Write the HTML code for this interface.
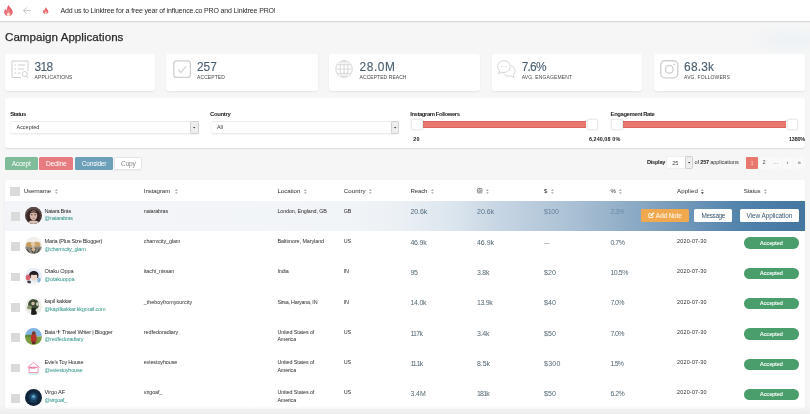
<!DOCTYPE html>
<html lang="en"><head><meta charset="utf-8"><title>Campaign Applications</title>
<style>
html,body{margin:0;padding:0}
body{width:810px;height:414px;overflow:hidden;position:relative;background:#f6f6f6;font-family:"Liberation Sans",sans-serif}
#app{position:absolute;left:0;top:0;width:810px;height:414px;will-change:transform;filter:blur(0.4px)}
.b{position:absolute;box-sizing:border-box}
.t{position:absolute;white-space:nowrap;display:block}
svg{position:absolute;overflow:visible}
</style></head>
<body>
<div id="app">
<div class="b" style="left:0.00px;top:0.00px;width:810.00px;height:22.00px;background:#fff;border-bottom:1.300px solid #d6d6d6;box-shadow:0 1px 1px rgba(0,0,0,.03);"></div>
<svg style="left:4.4px;top:5px" width="8.900" height="10.900" viewBox="0 0 18 22"><path d="M9.500 0C10.500 3.500 14 6 16 9.500 17.500 12 18 14 17.500 16 16.500 19.500 13 22 9 22 4.500 22 1 19 .5 15.500 0 12.500 1.500 10 3 8 3.500 9.500 4.500 10.500 5.500 11 5.500 7 7 3 9.500 0Z" fill="#e8606c"/><path d="M9.500 7C11 10 14 12 14 16 14 19.500 12 22 9 22 6 22 4 19.500 4 16.500 4 14 5.500 13 6.500 11.500 7.500 10 8.500 8.500 9.500 7Z" fill="#ee8285"/><path d="M9 14C10.500 16 12 17 12 19 12 21 10.500 22 9 22 7.500 22 6 21 6 19 6 17.500 7 17 7.500 16 8 16.500 8.300 16.800 8.600 16.800 8.600 15.800 8.700 15 9 14Z" fill="#fde6d2"/></svg>
<svg style="left:22.6px;top:6.8px" width="8.500" height="7.400" viewBox="0 0 17 15"><path d="M16.500 7.500H1.500M7.500 1L1 7.500l6.500 6.500" fill="none" stroke="#9c9c9c" stroke-width="1.200"/></svg>
<svg style="left:42.6px;top:6.8px" width="5.500" height="7.200" viewBox="0 0 18 22"><path d="M9.500 0C10.500 3.500 14 6 16 9.500 17.500 12 18 14 17.500 16 16.500 19.500 13 22 9 22 4.500 22 1 19 .5 15.500 0 12.500 1.500 10 3 8 3.500 9.500 4.500 10.500 5.500 11 5.500 7 7 3 9.500 0Z" fill="#e0575f"/><path d="M9.500 7C11 10 14 12 14 16 14 19.500 12 22 9 22 6 22 4 19.500 4 16.500 4 14 5.500 13 6.500 11.500 7.500 10 8.500 8.500 9.500 7Z" fill="#ee8285"/><path d="M9 14C10.500 16 12 17 12 19 12 21 10.500 22 9 22 7.500 22 6 21 6 19 6 17.500 7 17 7.500 16 8 16.500 8.300 16.800 8.600 16.800 8.600 15.800 8.700 15 9 14Z" fill="#fde6d2"/></svg>
<span class="t" style="left:60.50px;top:7.10px;font-size:7.00px;line-height:8.40px;color:#2b2b2b;letter-spacing:-0.146px;">Add us to Linktree for a free year of influence.co PRO and Linktree PRO!</span>
<div class="b" style="left:745.00px;top:24.00px;width:65.00px;height:32.00px;background:radial-gradient(ellipse at 70% 50%,rgba(230,239,246,.6) 0%,rgba(230,239,246,0) 70%);"></div>
<span class="t" style="left:5.00px;top:30.04px;font-size:11.60px;line-height:13.92px;color:#2a2a2a;letter-spacing:0.023px;-webkit-text-stroke:0.25px #2a2a2a;">Campaign Applications</span>
<div class="b" style="left:5.00px;top:54.40px;width:149.60px;height:36.40px;background:#fff;border-radius:3px;box-shadow:0 1px 2px rgba(0,0,0,.07);"></div>
<span class="t" style="left:34.60px;top:59.96px;font-size:11.90px;line-height:14.28px;color:#4a5f70;letter-spacing:-0.652px;-webkit-text-stroke:0.12px #4a5f70;">318</span>
<span class="t" style="left:34.60px;top:73.50px;font-size:5.00px;line-height:6.00px;color:#484848;letter-spacing:0.156px;">APPLICATIONS</span>
<div class="b" style="left:166.40px;top:54.40px;width:151.60px;height:36.40px;background:#fff;border-radius:3px;box-shadow:0 1px 2px rgba(0,0,0,.07);"></div>
<span class="t" style="left:197.00px;top:59.96px;font-size:11.90px;line-height:14.28px;color:#4a5f70;letter-spacing:-0.018px;-webkit-text-stroke:0.12px #4a5f70;">257</span>
<span class="t" style="left:197.00px;top:73.50px;font-size:5.00px;line-height:6.00px;color:#484848;letter-spacing:0.097px;">ACCEPTED</span>
<div class="b" style="left:329.10px;top:54.40px;width:150.70px;height:36.40px;background:#fff;border-radius:3px;box-shadow:0 1px 2px rgba(0,0,0,.07);"></div>
<span class="t" style="left:359.60px;top:59.96px;font-size:11.90px;line-height:14.28px;color:#4a5f70;letter-spacing:0.565px;-webkit-text-stroke:0.12px #4a5f70;">28.0M</span>
<span class="t" style="left:359.60px;top:73.50px;font-size:5.00px;line-height:6.00px;color:#484848;letter-spacing:0.056px;">ACCEPTED REACH</span>
<div class="b" style="left:491.80px;top:54.40px;width:150.40px;height:36.40px;background:#fff;border-radius:3px;box-shadow:0 1px 2px rgba(0,0,0,.07);"></div>
<span class="t" style="left:521.70px;top:59.96px;font-size:11.90px;line-height:14.28px;color:#4a5f70;letter-spacing:-0.756px;-webkit-text-stroke:0.12px #4a5f70;">7.6%</span>
<span class="t" style="left:521.70px;top:73.50px;font-size:5.00px;line-height:6.00px;color:#484848;letter-spacing:0.132px;">AVG. ENGAGEMENT</span>
<div class="b" style="left:653.90px;top:54.40px;width:150.90px;height:36.40px;background:#fff;border-radius:3px;box-shadow:0 1px 2px rgba(0,0,0,.07);"></div>
<span class="t" style="left:684.10px;top:59.96px;font-size:11.90px;line-height:14.28px;color:#4a5f70;letter-spacing:0.218px;-webkit-text-stroke:0.12px #4a5f70;">68.3k</span>
<span class="t" style="left:684.10px;top:73.50px;font-size:5.00px;line-height:6.00px;color:#484848;letter-spacing:0.110px;">AVG. FOLLOWERS</span>
<svg style="left:10.5px;top:59.8px" width="18" height="18.500" viewBox="0 0 36 37"><path d="M34 22V2H2v33h18" fill="none" stroke="#cfcfcf" stroke-width="2"/><path d="M7 10h3M14 10h14M7 18h3M14 18h12M7 26h3M14 26h5" stroke="#cfcfcf" stroke-width="2"/><circle cx="27.500" cy="28" r="5" fill="none" stroke="#cfcfcf" stroke-width="2"/><path d="M31 32l4 4" stroke="#cfcfcf" stroke-width="2"/></svg>
<svg style="left:172.7px;top:60px" width="18.200" height="18.300" viewBox="0 0 36 36"><rect x="1.500" y="1.500" width="33" height="33" rx="6" fill="none" stroke="#cfcfcf" stroke-width="2.500"/><path d="M10 19l5.500 5.500L26 12" fill="none" stroke="#cfcfcf" stroke-width="2"/></svg>
<svg style="left:335.3px;top:60.1px" width="18.100" height="18.100" viewBox="0 0 36 36"><g fill="none" stroke="#cfcfcf" stroke-width="1.600"><circle cx="18" cy="18" r="16.500"/><ellipse cx="18" cy="18" rx="8" ry="16.500"/><path d="M18 1.500v33M1.500 18h33M4 9.500h28M4 26.500h28"/></g></svg>
<svg style="left:497.4px;top:59.8px" width="18.800" height="18.500" viewBox="0 0 38 37"><g fill="none" stroke="#cfcfcf" stroke-width="1.800" stroke-linejoin="round"><path d="M14 1.500C7 1.500 1.500 6.500 1.500 13c0 3.200 1.300 6 3.500 8L3.500 28l6.500-3.500c1.300.3 2.600.5 4 .5 7 0 12.500-5 12.500-12S21 1.500 14 1.500Z"/><path d="M28.500 11c4.500 1.800 8 5.800 8 10.500 0 3-1.300 5.600-3.500 7.500l1.500 6.500-6.500-3.500c-1.300.3-2.600.5-4 .5-4.500 0-8.500-2-10.500-5"/></g><g fill="#cfcfcf"><circle cx="9" cy="13" r="1.300"/><circle cx="14" cy="13" r="1.300"/><circle cx="19" cy="13" r="1.300"/></g></svg>
<svg style="left:659.7px;top:60px" width="18.600" height="18.600" viewBox="0 0 36 36"><g fill="none" stroke="#cfcfcf" stroke-width="2.600"><rect x="1.500" y="1.500" width="33" height="33" rx="8"/><circle cx="18" cy="18" r="7.500"/></g><circle cx="27.500" cy="8.500" r="1.800" fill="#cfcfcf"/></svg>
<div class="b" style="left:5.00px;top:98.30px;width:800.00px;height:50.20px;background:#fff;border-radius:3px;box-shadow:0 1px 1.200px rgba(0,0,0,.12);"></div>
<span class="t" style="left:10.30px;top:110.56px;font-size:5.90px;line-height:7.08px;color:#222;letter-spacing:-0.422px;font-weight:700;">Status</span>
<span class="t" style="left:210.10px;top:110.56px;font-size:5.90px;line-height:7.08px;color:#222;letter-spacing:-0.331px;font-weight:700;">Country</span>
<span class="t" style="left:410.20px;top:110.56px;font-size:5.90px;line-height:7.08px;color:#222;letter-spacing:-0.420px;font-weight:700;">Instagram Followers</span>
<span class="t" style="left:610.60px;top:110.56px;font-size:5.90px;line-height:7.08px;color:#222;letter-spacing:-0.396px;font-weight:700;">Engagement Rate</span>
<div class="b" style="left:10.20px;top:121.10px;width:188.50px;height:12.50px;background:#fff;border:1px solid #ececec;border-left-color:#f7f7f7;border-radius:2px;box-shadow:0 1px 1px rgba(0,0,0,.04);"></div>
<div class="b" style="left:190.40px;top:121.10px;width:8.30px;height:12.50px;background:#eeeeee;border:1px solid #d2d2d2;border-radius:1.500px;"></div>
<svg style="left:193.40px;top:126.85px" width="2.400" height="1.600" viewBox="0 0 6 4"><path d="M0 0h6L3 4Z" fill="#333"/></svg>
<span class="t" style="left:16.50px;top:124.11px;font-size:5.40px;line-height:6.48px;color:#333;letter-spacing:0.036px;">Accepted</span>
<div class="b" style="left:210.60px;top:121.10px;width:188.40px;height:12.50px;background:#fff;border:1px solid #ececec;border-left-color:#f7f7f7;border-radius:2px;box-shadow:0 1px 1px rgba(0,0,0,.04);"></div>
<div class="b" style="left:390.70px;top:121.10px;width:8.30px;height:12.50px;background:#eeeeee;border:1px solid #d2d2d2;border-radius:1.500px;"></div>
<svg style="left:393.70px;top:126.85px" width="2.400" height="1.600" viewBox="0 0 6 4"><path d="M0 0h6L3 4Z" fill="#333"/></svg>
<span class="t" style="left:217.00px;top:124.11px;font-size:5.40px;line-height:6.48px;color:#333;letter-spacing:-0.067px;">All</span>
<div class="b" style="left:423.30px;top:121.10px;width:163.20px;height:6.50px;background:#e8786e;border-top:1px solid #d9675f;border-bottom:1px solid #d9675f;"></div>
<div class="b" style="left:410.70px;top:119.40px;width:12.60px;height:10.20px;background:#fff;border:1px solid #ececec;border-radius:2px;box-shadow:0 0 2px rgba(0,0,0,.12);"></div>
<div class="b" style="left:586.50px;top:119.40px;width:11.50px;height:10.20px;background:#fff;border:1px solid #ececec;border-radius:2px;box-shadow:0 0 2px rgba(0,0,0,.12);"></div>
<div class="b" style="left:623.30px;top:121.10px;width:163.20px;height:6.50px;background:#e8786e;border-top:1px solid #d9675f;border-bottom:1px solid #d9675f;"></div>
<div class="b" style="left:610.60px;top:119.40px;width:12.70px;height:10.20px;background:#fff;border:1px solid #ececec;border-radius:2px;box-shadow:0 0 2px rgba(0,0,0,.12);"></div>
<div class="b" style="left:786.50px;top:119.40px;width:11.40px;height:10.20px;background:#fff;border:1px solid #ececec;border-radius:2px;box-shadow:0 0 2px rgba(0,0,0,.12);"></div>
<span class="t" style="left:413.20px;top:135.96px;font-size:5.40px;line-height:6.48px;color:#222;letter-spacing:0.297px;font-weight:700;">20</span>
<span class="t" style="left:589.00px;top:135.96px;font-size:5.40px;line-height:6.48px;color:#222;letter-spacing:0.060px;font-weight:700;">6,240,08</span>
<span class="t" style="left:612.20px;top:135.96px;font-size:5.40px;line-height:6.48px;color:#222;letter-spacing:0.348px;font-weight:700;">0%</span>
<span class="t" style="left:789.00px;top:135.96px;font-size:5.40px;line-height:6.48px;color:#222;letter-spacing:-0.163px;font-weight:700;">1380%</span>
<div class="b" style="left:4.70px;top:156.50px;width:33.00px;height:13.00px;background:#7fbc99;border-radius:1.500px;"></div>
<span class="t" style="left:11.70px;top:159.64px;font-size:6.60px;line-height:7.92px;color:#fff;letter-spacing:-0.196px;">Accept</span>
<div class="b" style="left:39.10px;top:156.50px;width:34.40px;height:13.00px;background:#e77c80;border-radius:1.500px;"></div>
<span class="t" style="left:46.05px;top:159.64px;font-size:6.60px;line-height:7.92px;color:#fff;letter-spacing:-0.216px;">Decline</span>
<div class="b" style="left:75.00px;top:156.50px;width:38.00px;height:13.00px;background:#6ca0b8;border-radius:1.500px;"></div>
<span class="t" style="left:81.75px;top:159.64px;font-size:6.60px;line-height:7.92px;color:#fff;letter-spacing:-0.239px;">Consider</span>
<div class="b" style="left:114.20px;top:156.50px;width:28.30px;height:13.00px;background:#fff;border-radius:1.500px;border:1px solid #e0e6ea;box-shadow:0 1px 1px rgba(0,0,0,.04);"></div>
<span class="t" style="left:121.10px;top:159.64px;font-size:6.60px;line-height:7.92px;color:#858585;letter-spacing:-0.227px;">Copy</span>
<span class="t" style="left:646.90px;top:159.24px;font-size:5.60px;line-height:6.72px;color:#222;letter-spacing:-0.231px;font-weight:700;">Display</span>
<div class="b" style="left:666.40px;top:156.00px;width:26.60px;height:13.00px;background:#fff;border:1px solid #efefef;border-radius:2px;"></div>
<div class="b" style="left:684.90px;top:156.00px;width:7.80px;height:13.00px;background:#efefef;border:1px solid #cfcfcf;border-radius:1.500px;"></div>
<svg style="left:687.6px;top:162px" width="2.400" height="1.600" viewBox="0 0 6 4"><path d="M0 0h6L3 4Z" fill="#333"/></svg>
<span class="t" style="left:672.30px;top:159.84px;font-size:5.60px;line-height:6.72px;color:#444;letter-spacing:-0.165px;">25</span>
<span class="t" style="left:694.60px;top:159.24px;font-size:5.60px;line-height:6.72px;color:#333;letter-spacing:-0.175px;">of </span>
<span class="t" style="left:700.30px;top:159.24px;font-size:5.60px;line-height:6.72px;color:#222;letter-spacing:-0.281px;font-weight:700;">257</span>
<span class="t" style="left:710.20px;top:159.24px;font-size:5.60px;line-height:6.72px;color:#333;letter-spacing:-0.081px;">applications</span>
<div class="b" style="left:746.30px;top:156.60px;width:11.50px;height:12.00px;background:#e8786e;border-radius:1px;"></div>
<span class="t" style="left:750.60px;top:159.54px;font-size:5.60px;line-height:6.72px;color:#f8cfca;">1</span>
<div class="b" style="left:758.50px;top:156.60px;width:11.20px;height:12.00px;background:#f9f9f9;border-radius:1px;"></div>
<span class="t" style="left:762.54px;top:159.34px;font-size:5.60px;line-height:6.72px;color:#555;">2</span>
<div class="b" style="left:770.20px;top:156.60px;width:11.20px;height:12.00px;background:#f9f9f9;border-radius:1px;"></div>
<span class="t" style="left:773.00px;top:159.34px;font-size:5.60px;line-height:6.72px;color:#555;">…</span>
<div class="b" style="left:781.90px;top:156.60px;width:11.20px;height:12.00px;background:#f9f9f9;border-radius:1px;"></div>
<span class="t" style="left:786.57px;top:159.34px;font-size:5.60px;line-height:6.72px;color:#555;">›</span>
<div class="b" style="left:793.60px;top:156.60px;width:11.20px;height:12.00px;background:#f9f9f9;border-radius:1px;"></div>
<span class="t" style="left:797.64px;top:159.34px;font-size:5.60px;line-height:6.72px;color:#555;">»</span>
<div class="b" style="left:5.00px;top:180.30px;width:800.00px;height:229.20px;background:#fff;border-radius:3px 3px 0 0;box-shadow:0 1px 2px rgba(0,0,0,.08);"></div>
<div class="b" style="left:5.00px;top:200.50px;width:799.50px;height:30.40px;background:linear-gradient(to right,#f3f5f8 0%,#f2f5f8 42%,#ebf0f5 49.4%,#dce6ee 55.7%,#c6d5e3 61.9%,#afc4d7 69.4%,#93afc8 76.9%,#6d95b8 85.7%,#4f81aa 92.5%,#4576a0 100%);"></div>
<div class="b" style="left:10.30px;top:186.70px;width:9.40px;height:9.00px;background:#dadada;"></div>
<span class="t" style="left:23.70px;top:187.04px;font-size:6.10px;line-height:7.32px;color:#2e2e2e;letter-spacing:-0.105px;">Username</span>
<svg style="left:55.00px;top:188.7px" width="2.800" height="5.100" viewBox="0 0 7 13"><path d="M3.500 0L7 5H0Z" fill="#a8a8a8"/><path d="M3.500 13L0 8h7Z" fill="#a8a8a8"/></svg>
<span class="t" style="left:143.80px;top:187.04px;font-size:6.10px;line-height:7.32px;color:#2e2e2e;letter-spacing:-0.080px;">Instagram</span>
<svg style="left:174.50px;top:188.7px" width="2.800" height="5.100" viewBox="0 0 7 13"><path d="M3.500 0L7 5H0Z" fill="#a8a8a8"/><path d="M3.500 13L0 8h7Z" fill="#a8a8a8"/></svg>
<span class="t" style="left:277.40px;top:187.04px;font-size:6.10px;line-height:7.32px;color:#2e2e2e;letter-spacing:-0.008px;">Location</span>
<svg style="left:303.60px;top:188.7px" width="2.800" height="5.100" viewBox="0 0 7 13"><path d="M3.500 0L7 5H0Z" fill="#a8a8a8"/><path d="M3.500 13L0 8h7Z" fill="#a8a8a8"/></svg>
<span class="t" style="left:343.70px;top:187.04px;font-size:6.10px;line-height:7.32px;color:#2e2e2e;letter-spacing:0.091px;">Country</span>
<svg style="left:369.00px;top:188.7px" width="2.800" height="5.100" viewBox="0 0 7 13"><path d="M3.500 0L7 5H0Z" fill="#a8a8a8"/><path d="M3.500 13L0 8h7Z" fill="#a8a8a8"/></svg>
<span class="t" style="left:410.40px;top:187.04px;font-size:6.10px;line-height:7.32px;color:#2e2e2e;letter-spacing:-0.147px;">Reach</span>
<svg style="left:430.60px;top:188.7px" width="2.800" height="5.100" viewBox="0 0 7 13"><path d="M3.500 0L7 5H0Z" fill="#a8a8a8"/><path d="M3.500 13L0 8h7Z" fill="#a8a8a8"/></svg>
<svg style="left:477px;top:188px" width="5.400" height="5.400" viewBox="0 0 12 12"><rect x="1" y="1" width="10" height="10" rx="2.500" fill="none" stroke="#333" stroke-width="1.300"/><circle cx="6" cy="6" r="2.300" fill="none" stroke="#333" stroke-width="1.200"/></svg>
<svg style="left:485.60px;top:188.7px" width="2.800" height="5.100" viewBox="0 0 7 13"><path d="M3.500 0L7 5H0Z" fill="#a8a8a8"/><path d="M3.500 13L0 8h7Z" fill="#a8a8a8"/></svg>
<span class="t" style="left:544.00px;top:187.04px;font-size:6.10px;line-height:7.32px;color:#2e2e2e;letter-spacing:-0.093px;">$</span>
<svg style="left:550.60px;top:188.7px" width="2.800" height="5.100" viewBox="0 0 7 13"><path d="M3.500 0L7 5H0Z" fill="#a8a8a8"/><path d="M3.500 13L0 8h7Z" fill="#a8a8a8"/></svg>
<span class="t" style="left:610.40px;top:187.04px;font-size:6.10px;line-height:7.32px;color:#2e2e2e;letter-spacing:-0.224px;">%</span>
<svg style="left:618.80px;top:188.7px" width="2.800" height="5.100" viewBox="0 0 7 13"><path d="M3.500 0L7 5H0Z" fill="#a8a8a8"/><path d="M3.500 13L0 8h7Z" fill="#a8a8a8"/></svg>
<span class="t" style="left:677.00px;top:187.04px;font-size:6.10px;line-height:7.32px;color:#2e2e2e;letter-spacing:0.093px;">Applied</span>
<svg style="left:701.40px;top:188.7px" width="2.800" height="5.100" viewBox="0 0 7 13"><path d="M3.500 0L7 5H0Z" fill="#a8a8a8"/><path d="M3.500 13L0 8h7Z" fill="#222"/></svg>
<span class="t" style="left:743.70px;top:187.04px;font-size:6.10px;line-height:7.32px;color:#2e2e2e;letter-spacing:-0.066px;">Status</span>
<svg style="left:764.00px;top:188.7px" width="2.800" height="5.100" viewBox="0 0 7 13"><path d="M3.500 0L7 5H0Z" fill="#a8a8a8"/><path d="M3.500 13L0 8h7Z" fill="#a8a8a8"/></svg>
<div class="b" style="left:10.60px;top:212.00px;width:9.20px;height:8.80px;background:#dadada;"></div>
<span class="t" style="left:44.50px;top:207.54px;font-size:5.60px;line-height:6.72px;color:#2b2b2b;letter-spacing:-0.279px;">Naiara Brás</span>
<span class="t" style="left:44.50px;top:215.24px;font-size:5.60px;line-height:6.72px;color:#2f9488;letter-spacing:-0.359px;">@naiarabras</span>
<span class="t" style="left:143.80px;top:207.66px;font-size:5.40px;line-height:6.48px;color:#2b2b2b;letter-spacing:-0.122px;">naiarabras</span>
<span class="t" style="left:277.40px;top:207.66px;font-size:5.40px;line-height:6.48px;color:#2b2b2b;letter-spacing:-0.118px;">London, England, GB</span>
<span class="t" style="left:343.70px;top:207.66px;font-size:5.40px;line-height:6.48px;color:#2b2b2b;letter-spacing:-0.151px;">GB</span>
<span class="t" style="left:410.40px;top:208.40px;font-size:7.00px;line-height:8.40px;color:#52697c;letter-spacing:-0.045px;">20.6k</span>
<span class="t" style="left:477.00px;top:208.40px;font-size:7.00px;line-height:8.40px;color:#5a7389;letter-spacing:0.035px;">20.6k</span>
<span class="t" style="left:544.00px;top:208.40px;font-size:7.00px;line-height:8.40px;color:#67839c;letter-spacing:-0.243px;">$100</span>
<span class="t" style="left:610.40px;top:208.40px;font-size:7.00px;line-height:8.40px;color:#6b8aa6;letter-spacing:-0.614px;">2.3%</span>
<div class="b" style="left:10.60px;top:242.30px;width:9.20px;height:8.80px;background:#dadada;"></div>
<span class="t" style="left:44.50px;top:237.84px;font-size:5.60px;line-height:6.72px;color:#2b2b2b;letter-spacing:-0.232px;">Maria (Plus Size Blogger)</span>
<span class="t" style="left:44.50px;top:245.54px;font-size:5.60px;line-height:6.72px;color:#2f9488;letter-spacing:-0.253px;">@charmcity_glam</span>
<span class="t" style="left:143.80px;top:237.96px;font-size:5.40px;line-height:6.48px;color:#2b2b2b;letter-spacing:-0.094px;">charmcity_glam</span>
<span class="t" style="left:277.40px;top:237.96px;font-size:5.40px;line-height:6.48px;color:#2b2b2b;letter-spacing:-0.069px;">Baltimore, Maryland</span>
<span class="t" style="left:343.70px;top:237.96px;font-size:5.40px;line-height:6.48px;color:#2b2b2b;letter-spacing:-0.101px;">US</span>
<span class="t" style="left:410.40px;top:238.70px;font-size:7.00px;line-height:8.40px;color:#536672;letter-spacing:-0.185px;">46.9k</span>
<span class="t" style="left:477.00px;top:238.70px;font-size:7.00px;line-height:8.40px;color:#536672;letter-spacing:-0.025px;">46.9k</span>
<span class="t" style="left:544.00px;top:239.54px;font-size:5.60px;line-height:6.72px;color:#536672;letter-spacing:-0.100px;">—</span>
<span class="t" style="left:610.40px;top:238.70px;font-size:7.00px;line-height:8.40px;color:#536672;letter-spacing:-0.439px;">0.7%</span>
<span class="t" style="left:677.00px;top:237.96px;font-size:5.40px;line-height:6.48px;color:#2b2b2b;letter-spacing:0.218px;">2020-07-30</span>
<div class="b" style="left:743.60px;top:237.40px;width:55.50px;height:11.40px;background:#4a9e6c;border-radius:5.700px;"></div>
<span class="t" style="left:759.80px;top:239.84px;font-size:5.60px;line-height:6.72px;color:#f4fbf6;letter-spacing:-0.301px;font-weight:700;">Accepted</span>
<div class="b" style="left:10.60px;top:272.60px;width:9.20px;height:8.80px;background:#dadada;"></div>
<span class="t" style="left:44.50px;top:268.14px;font-size:5.60px;line-height:6.72px;color:#2b2b2b;letter-spacing:-0.130px;">Otaku Oppa</span>
<span class="t" style="left:44.50px;top:275.84px;font-size:5.60px;line-height:6.72px;color:#2f9488;letter-spacing:-0.194px;">@otakuoppa</span>
<span class="t" style="left:143.80px;top:268.26px;font-size:5.40px;line-height:6.48px;color:#2b2b2b;letter-spacing:-0.063px;">itachi_nissan</span>
<span class="t" style="left:277.40px;top:268.26px;font-size:5.40px;line-height:6.48px;color:#2b2b2b;letter-spacing:-0.102px;">India</span>
<span class="t" style="left:343.70px;top:268.26px;font-size:5.40px;line-height:6.48px;color:#2b2b2b;letter-spacing:-0.300px;">IN</span>
<span class="t" style="left:410.40px;top:269.00px;font-size:7.00px;line-height:8.40px;color:#536672;letter-spacing:-0.193px;">95</span>
<span class="t" style="left:477.00px;top:269.00px;font-size:7.00px;line-height:8.40px;color:#536672;letter-spacing:-0.258px;">3.8k</span>
<span class="t" style="left:544.00px;top:269.00px;font-size:7.00px;line-height:8.40px;color:#536672;letter-spacing:0.073px;">$20</span>
<span class="t" style="left:610.40px;top:269.00px;font-size:7.00px;line-height:8.40px;color:#536672;letter-spacing:-0.450px;">10.5%</span>
<span class="t" style="left:677.00px;top:268.26px;font-size:5.40px;line-height:6.48px;color:#2b2b2b;letter-spacing:0.218px;">2020-07-30</span>
<div class="b" style="left:743.60px;top:267.70px;width:55.50px;height:11.40px;background:#4a9e6c;border-radius:5.700px;"></div>
<span class="t" style="left:759.80px;top:270.14px;font-size:5.60px;line-height:6.72px;color:#f4fbf6;letter-spacing:-0.301px;font-weight:700;">Accepted</span>
<div class="b" style="left:10.60px;top:302.90px;width:9.20px;height:8.80px;background:#dadada;"></div>
<span class="t" style="left:44.50px;top:298.44px;font-size:5.60px;line-height:6.72px;color:#2b2b2b;letter-spacing:-0.197px;">kapil kakkar</span>
<span class="t" style="left:44.50px;top:306.14px;font-size:5.60px;line-height:6.72px;color:#2f9488;letter-spacing:-0.211px;">@kapilkakkar.kkgmail.com</span>
<span class="t" style="left:143.80px;top:298.56px;font-size:5.40px;line-height:6.48px;color:#2b2b2b;letter-spacing:-0.012px;">_theboyfromyourcity</span>
<span class="t" style="left:277.40px;top:298.56px;font-size:5.40px;line-height:6.48px;color:#2b2b2b;letter-spacing:-0.229px;">Sirsa, Haryana, IN</span>
<span class="t" style="left:343.70px;top:298.56px;font-size:5.40px;line-height:6.48px;color:#2b2b2b;letter-spacing:-0.300px;">IN</span>
<span class="t" style="left:410.40px;top:299.30px;font-size:7.00px;line-height:8.40px;color:#536672;letter-spacing:-0.245px;">14.0k</span>
<span class="t" style="left:477.00px;top:299.30px;font-size:7.00px;line-height:8.40px;color:#536672;letter-spacing:-0.365px;">13.9k</span>
<span class="t" style="left:544.00px;top:299.30px;font-size:7.00px;line-height:8.40px;color:#536672;letter-spacing:0.073px;">$40</span>
<span class="t" style="left:610.40px;top:299.30px;font-size:7.00px;line-height:8.40px;color:#536672;letter-spacing:-0.614px;">7.0%</span>
<span class="t" style="left:677.00px;top:298.56px;font-size:5.40px;line-height:6.48px;color:#2b2b2b;letter-spacing:0.218px;">2020-07-30</span>
<div class="b" style="left:743.60px;top:298.00px;width:55.50px;height:11.40px;background:#4a9e6c;border-radius:5.700px;"></div>
<span class="t" style="left:759.80px;top:300.44px;font-size:5.60px;line-height:6.72px;color:#f4fbf6;letter-spacing:-0.301px;font-weight:700;">Accepted</span>
<div class="b" style="left:10.60px;top:333.20px;width:9.20px;height:8.80px;background:#dadada;"></div>
<span class="t" style="left:44.50px;top:328.74px;font-size:5.60px;line-height:6.72px;color:#2b2b2b;letter-spacing:-0.227px;">Baia ✈ Travel Writer | Blogger</span>
<span class="t" style="left:44.50px;top:336.44px;font-size:5.60px;line-height:6.72px;color:#2f9488;letter-spacing:-0.200px;">@redfedoradiary</span>
<span class="t" style="left:143.80px;top:328.86px;font-size:5.40px;line-height:6.48px;color:#2b2b2b;letter-spacing:-0.023px;">redfedoradiary</span>
<span class="t" style="left:277.40px;top:328.86px;font-size:5.40px;line-height:6.48px;color:#2b2b2b;letter-spacing:-0.095px;">United States of</span>
<span class="t" style="left:277.40px;top:336.46px;font-size:5.40px;line-height:6.48px;color:#2b2b2b;letter-spacing:-0.172px;">America</span>
<span class="t" style="left:343.70px;top:328.86px;font-size:5.40px;line-height:6.48px;color:#2b2b2b;letter-spacing:-0.101px;">US</span>
<span class="t" style="left:410.40px;top:329.60px;font-size:7.00px;line-height:8.40px;color:#536672;letter-spacing:-0.690px;">117k</span>
<span class="t" style="left:477.00px;top:329.60px;font-size:7.00px;line-height:8.40px;color:#536672;letter-spacing:-0.233px;">3.4k</span>
<span class="t" style="left:544.00px;top:329.60px;font-size:7.00px;line-height:8.40px;color:#536672;letter-spacing:0.107px;">$50</span>
<span class="t" style="left:610.40px;top:329.60px;font-size:7.00px;line-height:8.40px;color:#536672;letter-spacing:-0.589px;">7.0%</span>
<span class="t" style="left:677.00px;top:328.86px;font-size:5.40px;line-height:6.48px;color:#2b2b2b;letter-spacing:0.218px;">2020-07-30</span>
<div class="b" style="left:743.60px;top:328.30px;width:55.50px;height:11.40px;background:#4a9e6c;border-radius:5.700px;"></div>
<span class="t" style="left:759.80px;top:330.74px;font-size:5.60px;line-height:6.72px;color:#f4fbf6;letter-spacing:-0.301px;font-weight:700;">Accepted</span>
<div class="b" style="left:10.60px;top:363.50px;width:9.20px;height:8.80px;background:#dadada;"></div>
<span class="t" style="left:44.50px;top:359.04px;font-size:5.60px;line-height:6.72px;color:#2b2b2b;letter-spacing:-0.242px;">Evie&#x27;s Toy House</span>
<span class="t" style="left:44.50px;top:366.74px;font-size:5.60px;line-height:6.72px;color:#2f9488;letter-spacing:-0.263px;">@eviestoyhouse</span>
<span class="t" style="left:143.80px;top:359.16px;font-size:5.40px;line-height:6.48px;color:#2b2b2b;letter-spacing:-0.079px;">eviestoyhouse</span>
<span class="t" style="left:277.40px;top:359.16px;font-size:5.40px;line-height:6.48px;color:#2b2b2b;letter-spacing:-0.095px;">United States of</span>
<span class="t" style="left:277.40px;top:366.76px;font-size:5.40px;line-height:6.48px;color:#2b2b2b;letter-spacing:-0.172px;">America</span>
<span class="t" style="left:343.70px;top:359.16px;font-size:5.40px;line-height:6.48px;color:#2b2b2b;letter-spacing:-0.101px;">US</span>
<span class="t" style="left:410.40px;top:359.90px;font-size:7.00px;line-height:8.40px;color:#536672;letter-spacing:-0.941px;">11.1k</span>
<span class="t" style="left:477.00px;top:359.90px;font-size:7.00px;line-height:8.40px;color:#536672;letter-spacing:-0.058px;">8.5k</span>
<span class="t" style="left:544.00px;top:359.90px;font-size:7.00px;line-height:8.40px;color:#536672;letter-spacing:0.282px;">$300</span>
<span class="t" style="left:610.40px;top:359.90px;font-size:7.00px;line-height:8.40px;color:#536672;letter-spacing:-0.764px;">1.5%</span>
<span class="t" style="left:677.00px;top:359.16px;font-size:5.40px;line-height:6.48px;color:#2b2b2b;letter-spacing:0.218px;">2020-07-30</span>
<div class="b" style="left:743.60px;top:358.60px;width:55.50px;height:11.40px;background:#4a9e6c;border-radius:5.700px;"></div>
<span class="t" style="left:759.80px;top:361.04px;font-size:5.60px;line-height:6.72px;color:#f4fbf6;letter-spacing:-0.301px;font-weight:700;">Accepted</span>
<div class="b" style="left:10.60px;top:393.80px;width:9.20px;height:8.80px;background:#dadada;"></div>
<span class="t" style="left:44.50px;top:389.34px;font-size:5.60px;line-height:6.72px;color:#2b2b2b;letter-spacing:-0.109px;">Virgo AF</span>
<span class="t" style="left:44.50px;top:397.04px;font-size:5.60px;line-height:6.72px;color:#2f9488;letter-spacing:-0.379px;">@virgoaf_</span>
<span class="t" style="left:143.80px;top:389.46px;font-size:5.40px;line-height:6.48px;color:#2b2b2b;letter-spacing:-0.089px;">virgoaf_</span>
<span class="t" style="left:277.40px;top:389.46px;font-size:5.40px;line-height:6.48px;color:#2b2b2b;letter-spacing:-0.095px;">United States of</span>
<span class="t" style="left:277.40px;top:397.06px;font-size:5.40px;line-height:6.48px;color:#2b2b2b;letter-spacing:-0.172px;">America</span>
<span class="t" style="left:343.70px;top:389.46px;font-size:5.40px;line-height:6.48px;color:#2b2b2b;letter-spacing:-0.101px;">US</span>
<span class="t" style="left:410.40px;top:390.20px;font-size:7.00px;line-height:8.40px;color:#536672;letter-spacing:-0.066px;">3.4M</span>
<span class="t" style="left:477.00px;top:390.20px;font-size:7.00px;line-height:8.40px;color:#536672;letter-spacing:-0.795px;">181k</span>
<span class="t" style="left:544.00px;top:390.20px;font-size:7.00px;line-height:8.40px;color:#536672;letter-spacing:0.107px;">$50</span>
<span class="t" style="left:610.40px;top:390.20px;font-size:7.00px;line-height:8.40px;color:#536672;letter-spacing:-0.514px;">6.2%</span>
<span class="t" style="left:677.00px;top:389.46px;font-size:5.40px;line-height:6.48px;color:#2b2b2b;letter-spacing:0.218px;">2020-07-30</span>
<div class="b" style="left:743.60px;top:388.90px;width:55.50px;height:11.40px;background:#4a9e6c;border-radius:5.700px;"></div>
<span class="t" style="left:759.80px;top:391.34px;font-size:5.60px;line-height:6.72px;color:#f4fbf6;letter-spacing:-0.301px;font-weight:700;">Accepted</span>
<div class="b" style="left:641.00px;top:209.30px;width:47.70px;height:12.40px;background:#f0a94e;border-radius:1.500px;"></div>
<svg style="left:648.3px;top:212.3px" width="6.400" height="6.400" viewBox="0 0 12 12"><path d="M9 6.500V10.500H1.500V3H6" fill="none" stroke="#fff" stroke-width="1.500"/><path d="M4.500 8l.5-2.500L10 .5l2 2L7 7.500Z" fill="#fff"/></svg>
<span class="t" style="left:655.60px;top:212.00px;font-size:6.50px;line-height:7.80px;color:#fce8cc;letter-spacing:-0.386px;font-weight:700;">Add Note</span>
<div class="b" style="left:694.10px;top:209.30px;width:38.10px;height:12.40px;background:#fff;border-radius:1.500px;"></div>
<span class="t" style="left:701.60px;top:211.96px;font-size:6.40px;line-height:7.68px;color:#38546d;letter-spacing:-0.367px;">Message</span>
<div class="b" style="left:740.00px;top:209.30px;width:59.10px;height:12.40px;background:#fff;border-radius:1.500px;"></div>
<span class="t" style="left:746.50px;top:211.96px;font-size:6.40px;line-height:7.68px;color:#38546d;letter-spacing:-0.043px;">View Application</span>
<svg style="left:24.6px;top:207.00px" width="17" height="17" viewBox="0 0 34 34"><defs><clipPath id="c0"><circle cx="17" cy="17" r="17"/></clipPath></defs><g clip-path="url(#c0)"><rect width="34" height="34" fill="#4b3833"/><rect width="34" height="12" fill="#5d4c47"/><path d="M5 34V14C5 2 29 2 29 14V34Z" fill="#33221f"/><ellipse cx="17" cy="17" rx="7.500" ry="10" fill="#d2b3a6"/><path d="M4 34c2-6 8-7 13-7s11 1 13 7Z" fill="#d9c3b9"/><path d="M9.500 13c1-6 14-6 15 0-3-3-12-3-15 0Z" fill="#33221f"/><ellipse cx="13.500" cy="15.500" rx="1.800" ry="1" fill="#4a332d"/><ellipse cx="20.500" cy="15.500" rx="1.800" ry="1" fill="#4a332d"/><ellipse cx="17" cy="22.500" rx="2.200" ry=".9" fill="#a8685f"/></g></svg>
<svg style="left:24.6px;top:237.30px" width="17" height="17" viewBox="0 0 34 34"><defs><clipPath id="c1"><circle cx="17" cy="17" r="17"/></clipPath></defs><g clip-path="url(#c1)"><rect width="34" height="34" fill="#f1eee9"/><ellipse cx="9" cy="16" rx="7" ry="6" fill="#c79a5c"/><ellipse cx="23" cy="15" rx="8" ry="5.500" fill="#cfa468"/><ellipse cx="16" cy="14" rx="4" ry="4" fill="#e6cdb2"/><path d="M0 20c6-3 12 2 17 1s11-4 17-1v14H0Z" fill="#8d8a84"/><path d="M4 24l5 8M12 22l4 10M22 22l-3 11M29 23l-5 9" stroke="#4f4c48" stroke-width="2.500"/><ellipse cx="17" cy="25" rx="4" ry="3" fill="#d9b48c"/></g></svg>
<svg style="left:24.6px;top:267.60px" width="17" height="17" viewBox="0 0 34 34"><defs><clipPath id="c2"><circle cx="17" cy="17" r="17"/></clipPath></defs><g clip-path="url(#c2)"><rect width="34" height="34" fill="#e6edf5"/><path d="M8 17C7 3 27 3 27 15l-1 5H9Z" fill="#241f25"/><ellipse cx="18" cy="18" rx="6.500" ry="7.500" fill="#ecd6ca"/><path d="M10 13c3-6 12-6 16 0-5 1-11 1-16 0Z" fill="#241f25"/><path d="M4 34c2-8 26-8 28 0Z" fill="#f6f6f6"/><ellipse cx="6" cy="19" rx="4.500" ry="6" fill="#d9626f"/><ellipse cx="8" cy="28" rx="4" ry="3" fill="#3b3a44"/><ellipse cx="28" cy="24" rx="3.500" ry="5" fill="#8db8dc"/></g></svg>
<svg style="left:24.6px;top:297.90px" width="17" height="17" viewBox="0 0 34 34"><defs><clipPath id="c3"><circle cx="17" cy="17" r="17"/></clipPath></defs><g clip-path="url(#c3)"><rect width="34" height="34" fill="#eeeee8"/><path d="M9 6c4-5 14-4 17 1s2 12-2 15-13 2-16-3-2-10 1-13Z" fill="#3f4c38"/><circle cx="16" cy="11" r="3.500" fill="#cbb9a0"/><ellipse cx="9" cy="19" rx="5" ry="4" fill="#8a9a6b"/><ellipse cx="25" cy="12" rx="3" ry="4" fill="#c9d1b5"/><path d="M13 20h9l2 14H12Z" fill="#1c1e1b"/><ellipse cx="24" cy="24" rx="3" ry="3" fill="#dfe3d4"/></g></svg>
<svg style="left:24.6px;top:328.20px" width="17" height="17" viewBox="0 0 34 34"><defs><clipPath id="c4"><circle cx="17" cy="17" r="17"/></clipPath></defs><g clip-path="url(#c4)"><rect width="34" height="17" fill="#7fb3e0"/><rect y="17" width="34" height="17" fill="#7c9b3e"/><ellipse cx="8" cy="16" rx="8" ry="3" fill="#5e8a3a"/><rect x="12" y="13" width="11" height="15" rx="2" fill="#b9332d"/><circle cx="17.500" cy="10.500" r="3.800" fill="#7b3a2a"/><rect x="14" y="27" width="7" height="5" fill="#5b2a22"/></g></svg>
<svg style="left:24.6px;top:358.50px" width="17" height="17" viewBox="0 0 34 34"><defs><clipPath id="c5"><circle cx="17" cy="17" r="17"/></clipPath></defs><g clip-path="url(#c5)"><rect width="34" height="34" fill="#fff"/><path d="M5 17L17 7l12 10" fill="none" stroke="#ec7fa6" stroke-width="1.800"/><rect x="8" y="16.500" width="18" height="10.500" fill="none" stroke="#ec7fa6" stroke-width="1.600"/><path d="M6 30h22" stroke="#a5dde8" stroke-width="1.800"/></g></svg>
<svg style="left:24.6px;top:388.80px" width="17" height="17" viewBox="0 0 34 34"><defs><clipPath id="c6"><circle cx="17" cy="17" r="17"/></clipPath></defs><g clip-path="url(#c6)"><rect width="34" height="34" fill="#10243a"/><circle cx="17" cy="16" r="9" fill="#193f60"/><circle cx="17" cy="16" r="5.500" fill="#2c6890"/><circle cx="17" cy="15" r="2.500" fill="#7fb2d2"/><path d="M10 24c4 3 10 3 14 0" stroke="#25597f" stroke-width="1.500" fill="none"/></g></svg>
<span class="t" style="left:29.20px;top:366.14px;font-size:3.60px;line-height:4.32px;color:#e5598a;font-weight:700;font-style:italic;">evie</span>
<div class="b" style="left:0.00px;top:405.50px;width:810.00px;height:9.00px;background:linear-gradient(to bottom,rgba(240,240,240,0) 0%,rgba(240,240,240,.6) 30%,#f0f0f0 55%,#ededed 100%);"></div>
</div>
</body></html>
